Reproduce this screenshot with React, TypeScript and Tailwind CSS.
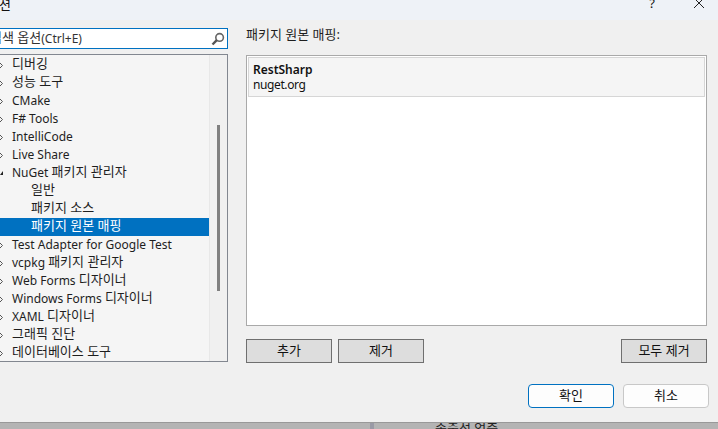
const font = "[font-family:'Noto_Sans','Noto_Sans_CJK_KR',sans-serif]";

function Txt({ text }: { text: string }) {
  const parts = text.split(/([가-힣]+(?: [가-힣]+)*)/);
  return (
    <>
      {parts.map((p, i) =>
        /[가-힣]/.test(p) ? (
          <span key={i} className="text-[13px] align-[1px] leading-none">
            {p}
          </span>
        ) : (
          <span key={i}>{p}</span>
        )
      )}
    </>
  );
}

function Chevron() {
  return (
    <svg width="5" height="7" viewBox="0 0 5 7" className="shrink-0 -ml-[1px]">
      <path d="M0.5 0.5 L3.5 3.5 L0.5 6.5 Z" fill="none" stroke="#555" strokeWidth="1" />
    </svg>
  );
}

function Row({ label, kind }: { label: string; kind: "closed" | "open" | "child" | "selected" }) {
  return (
    <div
      className={`h-[18px] flex items-center whitespace-nowrap leading-[18px] text-[12px] ${
        kind === "selected" ? "bg-[#0071c1] text-white" : "text-[#1e1e1e]"
      }`}
    >
      {kind === "closed" && (
        <div className="w-[12px] shrink-0">
          <Chevron />
        </div>
      )}
      {kind === "open" && (
        <div className="w-[12px] shrink-0">
          <svg width="4" height="6" viewBox="0 0 4 6" className="-mt-[1px]">
            <path d="M3 1 L3 5 L0 5 Z" fill="#222" />
          </svg>
        </div>
      )}
      {(kind === "child" || kind === "selected") && <div className="w-[31px] shrink-0" />}
      <span>
        <Txt text={label} />
      </span>
    </div>
  );
}

function Btn({ label, w }: { label: string; w: string }) {
  return (
    <button
      className={`${w} h-[24px] border border-[#6f6f6f] bg-[#dddddd] text-[13px] leading-[20px] pb-[2px] text-[#111] flex items-center justify-center`}
    >
      {label}
    </button>
  );
}

const rows: { label: string; kind: "closed" | "open" | "child" | "selected" }[] = [
  { label: "디버깅", kind: "closed" },
  { label: "성능 도구", kind: "closed" },
  { label: "CMake", kind: "closed" },
  { label: "F# Tools", kind: "closed" },
  { label: "IntelliCode", kind: "closed" },
  { label: "Live Share", kind: "closed" },
  { label: "NuGet 패키지 관리자", kind: "open" },
  { label: "일반", kind: "child" },
  { label: "패키지 소스", kind: "child" },
  { label: "패키지 원본 매핑", kind: "selected" },
  { label: "Test Adapter for Google Test", kind: "closed" },
  { label: "vcpkg 패키지 관리자", kind: "closed" },
  { label: "Web Forms 디자이너", kind: "closed" },
  { label: "Windows Forms 디자이너", kind: "closed" },
  { label: "XAML 디자이너", kind: "closed" },
  { label: "그래픽 진단", kind: "closed" },
  { label: "데이터베이스 도구", kind: "closed" },
];

export default function App() {
  return (
    <div className={`w-[718px] h-[429px] overflow-hidden flex flex-col bg-[#f0f0f0] ${font}`}>
      <div className="h-[20px] shrink-0 bg-[#eef2f7] flex items-end justify-between text-[#111] overflow-hidden">
        <span className="text-[13px] leading-[16px] -ml-[1px] mb-[8px] w-[12px] overflow-hidden whitespace-nowrap">션</span>
        <div className="flex items-start h-full">
          <span className="text-[13px] leading-[13px] -mt-[3px] mr-[38px]">?</span>
          <svg width="12" height="12" viewBox="0 0 12 12" className="-mt-[3px] mr-[13px]">
            <path d="M1 1 L11 11 M11 1 L1 11" stroke="#222" strokeWidth="1" />
          </svg>
        </div>
      </div>

      <div className="flex-1 flex min-h-0">
        <div className="w-[229px] shrink-0 pt-[8px]">
          <div className="h-[21px] border border-[#0071c1] border-l-0 bg-white flex items-center justify-between pr-[2px] mr-[1px] overflow-hidden">
            <span className="text-[12px] text-[#333] whitespace-nowrap -ml-[10px]">
              <Txt text="검색 옵션" />
              (Ctrl+E)
            </span>
            <svg width="14" height="14" viewBox="0 0 14 14">
              <circle cx="8.6" cy="5.4" r="3.8" fill="none" stroke="#666" strokeWidth="1.6" />
              <path d="M5.8 8.2 L1.5 12.5" stroke="#555" strokeWidth="2.4" />
            </svg>
          </div>
          <div className="mt-[5px] h-[308px] border border-[#828790] border-l-0 bg-[#f5f5f5] flex mr-[1px] overflow-hidden">
            <div className="w-[209px] pt-[1px] shrink-0">
              {rows.map((r) => (
                <Row key={r.label} label={r.label} kind={r.kind} />
              ))}
            </div>
            <div className="flex-1 bg-[#f0f0f0] flex justify-center pt-[70px] border-l border-[#e8e8e8]">
              <div className="w-[3px] h-[166px] bg-[#808080]" />
            </div>
          </div>
        </div>

        <div className="flex-1 pl-[17px] pr-[11px] flex flex-col text-[#1e1e1e]">
          <div className="h-[14px] mt-[7px] text-[13px] leading-[14px]">패키지 원본 매핑:</div>
          <div className="mt-[14px] h-[271px] border border-[#a9a9a9] bg-white p-[1px]">
            <div className="h-[40px] border border-[#d6d6d6] bg-[#f5f5f5] px-[4px] pt-[4px] text-[12px] leading-[15px] text-[#111]">
              <div className="font-semibold">RestSharp</div>
              <div className="tracking-[-0.4px]">nuget.org</div>
            </div>
          </div>
          <div className="mt-[13px] flex">
            <Btn label="추가" w="w-[86px]" />
            <Btn label="제거" w="w-[86px] ml-[6px]" />
            <Btn label="모두 제거" w="w-[86px] ml-auto" />
          </div>
          <div className="mt-[21px] -mr-[2px] flex justify-end gap-[9px]">
            <button className="w-[86px] h-[24px] rounded-[4px] border border-[#0071c1] bg-[#fdfdfd] text-[13px] text-[#111]">확인</button>
            <button className="w-[86px] h-[24px] rounded-[4px] border border-[#c8c8c8] bg-[#fdfdfd] text-[13px] text-[#111]">취소</button>
          </div>
        </div>
      </div>

      <div className="h-[7px] shrink-0 bg-[#b4b4b4] border-t border-[#999] flex overflow-hidden">
        <div className="w-[370px] shrink-0" />
        <div className="w-[4px] shrink-0 bg-[#9a9aa6]" />
        <span className="ml-[61px] text-[13px] leading-[13px] -mt-[1px] text-[#222] whitespace-nowrap">송출성 업중</span>
      </div>
    </div>
  );
}
